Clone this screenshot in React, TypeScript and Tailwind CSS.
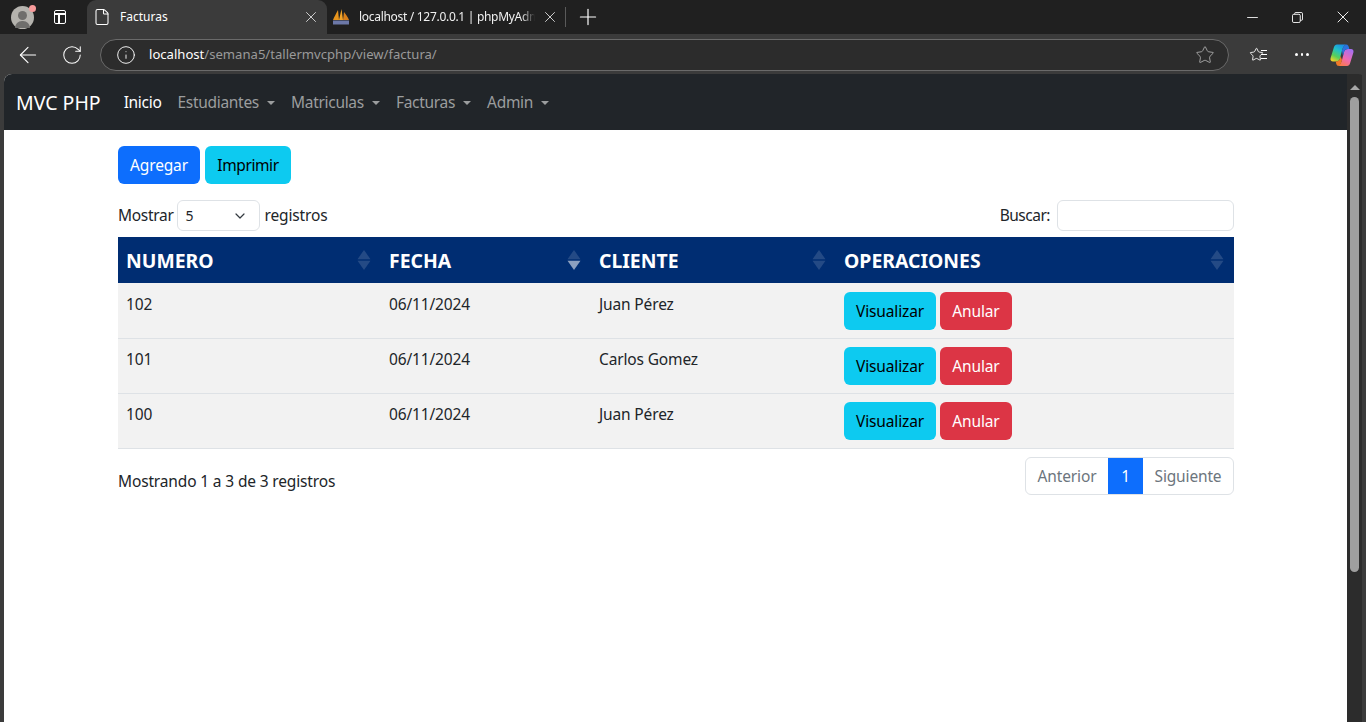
import React from "react";
import { ChevronDown, Info, RotateCw, ArrowLeft, Star, Plus, X, Minus, File } from "lucide-react";

const font = "[font-family:'Noto_Sans','Open_Sans',sans-serif]";

function Sort({ active }: { active?: boolean }) {
  return (
    <svg width="14" height="20" viewBox="0 0 14 20" className="absolute right-[10px] top-[13px]">
      <path d="M7 0 L13.5 9.2 H0.5 Z" fill="#fff" opacity="0.14" />
      <path d="M7 20 L13.5 10.8 H0.5 Z" fill="#fff" opacity={active ? 0.55 : 0.14} />
    </svg>
  );
}

function NavItem({ label, active, caret = true }: { label: string; active?: boolean; caret?: boolean }) {
  return (
    <a className={`flex items-center px-2 pt-[1px] text-[15.5px] tracking-[-0.3px] ${active ? "text-white" : "text-[#9b9d9e]"}`}>
      {label}
      {caret && <span className="ml-[8px] mt-[1px] h-0 w-0 border-x-[4.5px] border-t-[4.5px] border-x-transparent border-t-[#9b9d9e]" />}
    </a>
  );
}

function Copilot() {
  return (
    <svg width="24" height="24" viewBox="0 0 24 24">
      <defs>
        <linearGradient id="c1" x1="0.7" y1="0" x2="0.2" y2="1">
          <stop offset="0" stopColor="#1b8fe8" />
          <stop offset="0.35" stopColor="#21c0c8" />
          <stop offset="0.7" stopColor="#58cf58" />
          <stop offset="1" stopColor="#f5d327" />
        </linearGradient>
        <linearGradient id="c2" x1="0.7" y1="0" x2="0.2" y2="1">
          <stop offset="0" stopColor="#a86ff0" />
          <stop offset="0.55" stopColor="#f06ab0" />
          <stop offset="1" stopColor="#fb7a45" />
        </linearGradient>
      </defs>
      <path d="M7 1.5 H16 C14 2.5 12.8 4.5 12 7.5 L10 15.5 C9.5 17.5 8 18.5 6 18.5 H3 C1.2 18.5 0 17 0.6 15 L4 4 C4.5 2.5 5.5 1.5 7 1.5 Z" fill="url(#c1)" />
      <path d="M17 23 H8 C10 22 11.2 20 12 17 L14 9 C14.5 7 16 6 18 6 H21 C22.8 6 24 7.5 23.4 9.5 L20 20.5 C19.5 22 18.5 23 17 23 Z" fill="url(#c2)" />
      <path d="M12 7.5 C12.8 4.5 14 2.5 16 1.5 C18 1.5 19 3.5 19.3 6 H18 C16 6 14.5 7 14 9 L13 13 Z" fill="#2a73e0" />
      <path d="M12 17 L11 20 C10.5 21.5 9.5 22.5 8 23 C6.5 22.5 6 20.5 5.8 18.5 H6 C8 18.5 9.5 17.5 10 15.5 L10.6 13 Z" fill="#f07a28" />
    </svg>
  );
}

function Pma() {
  return (
    <svg width="18" height="18" viewBox="0 0 18 18">
      <path d="M1 12 C2 9 4 6 6 2 L7 12 Z" fill="#e8951c" />
      <path d="M7 12 L9.5 1 C10 5 10.5 8 11 12 Z" fill="#f2a428" />
      <path d="M11 12 L12 4 C14 7 16 9 17 12 Z" fill="#d9801a" />
      <rect x="1" y="12.5" width="16" height="4" fill="#6c78a8" />
    </svg>
  );
}

const rows = [
  ["102", "06/11/2024", "Juan Pérez"],
  ["101", "06/11/2024", "Carlos Gomez"],
  ["100", "06/11/2024", "Juan Pérez"],
];

export default function App() {
  return (
    <div className={`flex h-[722px] w-[1366px] flex-col overflow-hidden bg-[#3b3b3b] ${font}`}>
      {/* tab strip */}
      <div className="flex h-[34px] items-center bg-[#202020] text-white">
        <div className="relative ml-[11px] h-[23px] w-[23px] shrink-0 rounded-full bg-[#b5b3ae]">
          <span className="absolute left-[7px] top-[5px] h-[9px] w-[9px] rounded-full bg-[#6f6e6c]" />
          <span className="absolute left-[4px] top-[15px] h-[7px] w-[15px] rounded-t-full bg-[#6f6e6c]" />
          <span className="absolute -right-[2px] -top-[1px] h-[7px] w-[7px] rounded-full bg-[#f79a9a]" />
        </div>
        <div className="relative ml-[20px] h-[14px] w-[12px] shrink-0 rounded-[2px] border-[1.5px] border-white">
          <span className="absolute inset-x-0 top-[2px] h-[1.5px] bg-white" />
          <span className="absolute bottom-0 left-[3px] top-[2px] w-[1.5px] bg-white" />
        </div>
        <div className="ml-[21px] flex h-[34px] w-[240px] shrink-0 items-center self-end rounded-t-[9px] bg-[#3b3b3b] pl-[6px]">
          <File size={18} strokeWidth={1.4} />
          <span className="ml-[9px] text-[12px]">Facturas</span>
          <X size={18} strokeWidth={1.2} className="ml-auto mr-[7px] text-[#dcdcdc]" />
        </div>
        <div className="flex h-[34px] shrink-0 items-center pl-[5px]">
          <Pma />
          <span className="ml-[9px] w-[176px] overflow-hidden whitespace-nowrap text-[12px] tracking-[-0.3px] text-[#f0f0f0] [mask-image:linear-gradient(to_right,black_92%,transparent)]">localhost / 127.0.0.1 | phpMyAdmin</span>
          <X size={18} strokeWidth={1.2} className="ml-[6px] text-[#dcdcdc]" />
          <span className="ml-[6px] h-[20px] w-px bg-[#5a5a5a]" />
          <Plus size={26} strokeWidth={1.1} className="ml-[9px]" />
        </div>
        <div className="ml-auto flex items-center">
          <Minus size={17} strokeWidth={1.2} className="mr-[31px]" />
          <svg width="11" height="11" viewBox="0 0 12 12" fill="none" stroke="#fff" className="mr-[30px]">
            <rect x="0.5" y="2.5" width="8.5" height="9" rx="1.5" />
            <path d="M3 2.5 V1.5 A1 1 0 0 1 4 0.5 H10 A1.5 1.5 0 0 1 11.5 2 V8 A1 1 0 0 1 10.5 9 H9" />
          </svg>
          <X size={20} strokeWidth={1.1} className="mr-[13px]" />
        </div>
      </div>

      {/* toolbar */}
      <div className="flex h-[40px] items-center pt-[1px] text-white">
        <ArrowLeft size={26} strokeWidth={1.05} className="ml-[15px]" />
        <RotateCw size={22} strokeWidth={1.1} className="ml-[20px]" />
        <div className="ml-[17px] flex h-[32px] w-[1129px] items-center rounded-full border border-[#6a6a6a] bg-[#2c2c2c]">
          <Info size={20} strokeWidth={1.1} className="ml-[15px]" />
          <span className="ml-[13px] text-[13.1px] text-white">localhost<span className="text-[#9a9a9a]">/semana5/tallermvcphp/view/factura/</span></span>
          <Star size={20} strokeWidth={1.1} className="ml-auto mr-[13px] text-[#a8a8a8]" />
        </div>
        <div className="relative ml-[20px] h-[18px] w-[18px]">
          <Star size={15} strokeWidth={1.4} className="absolute left-0 top-[1px]" />
          <span className="absolute right-0 top-[4px] h-px w-[6px] bg-white" />
          <span className="absolute right-0 top-[8px] h-px w-[6px] bg-white" />
          <span className="absolute right-0 top-[12px] h-px w-[6px] bg-white" />
        </div>
        <div className="ml-[28px] flex gap-[3px]">
          <span className="h-[2.5px] w-[2.5px] rounded-full bg-white" />
          <span className="h-[2.5px] w-[2.5px] rounded-full bg-white" />
          <span className="h-[2.5px] w-[2.5px] rounded-full bg-white" />
        </div>
        <span className="ml-[21px] flex"><Copilot /></span>
      </div>

      {/* viewport */}
      <div className="ml-[4px] flex min-h-0 flex-1 overflow-hidden rounded-t-[8px]">
        <div className="flex w-[1343px] flex-col bg-white text-[#212529]">
          <nav className="flex h-[56px] items-center bg-[#212529] pl-[12px]">
            <span className="mr-[15px] pt-[1px] text-[19.5px] text-white">MVC PHP</span>
            <NavItem label="Inicio" active caret={false} />
            <NavItem label="Estudiantes" />
            <NavItem label="Matriculas" />
            <NavItem label="Facturas" />
            <NavItem label="Admin" />
          </nav>

          <main className="ml-[114px] w-[1116px] text-[15.5px] tracking-[-0.15px]">
            <div className="mt-[16px] flex gap-[5px]">
              <button className="h-[38px] w-[82px] rounded-[6px] bg-[#0d6efd] pt-[1px] text-white">Agregar</button>
              <button className="h-[38px] w-[86px] rounded-[6px] bg-[#0dcaf0] pt-[1px] tracking-[-0.4px] text-black">Imprimir</button>
            </div>

            <div className="mt-[16px] flex h-[31px] items-center justify-between">
              <div className="flex items-center">
                <span className="tracking-[-0.3px]">Mostrar</span>
                <div className="ml-[3px] mr-[5px] flex h-[31px] w-[83px] items-center justify-between rounded-[6px] border border-[#dee2e6] pl-[8px] pr-[11px] text-[14px]">
                  5
                  <ChevronDown size={16} strokeWidth={1.8} className="text-[#343a40]" />
                </div>
                registros
              </div>
              <div className="flex items-center">
                <span className="tracking-[-0.5px]">Buscar:</span>
                <div className="ml-[7px] h-[31px] w-[177px] rounded-[6px] border border-[#dee2e6]" />
              </div>
            </div>

            <table className="mt-[6px] w-[1116px] table-fixed border-collapse">
              <colgroup>
                <col className="w-[263px]" />
                <col className="w-[210px]" />
                <col className="w-[245px]" />
                <col className="w-[398px]" />
              </colgroup>
              <thead>
                <tr className="h-[46px] bg-[#002d72] text-left text-[19.4px] font-bold tracking-normal text-white">
                  <th className="relative px-[8px] pt-[1px]">NUMERO<Sort /></th>
                  <th className="relative px-[8px] pt-[1px]">FECHA<Sort active /></th>
                  <th className="relative px-[8px] pt-[1px]">CLIENTE<Sort /></th>
                  <th className="relative px-[8px] pt-[1px]">OPERACIONES<Sort /></th>
                </tr>
              </thead>
              <tbody>
                {rows.map((r, i) => (
                  <tr key={r[0]} className="h-[55px] border-b border-[#dee2e6] bg-[#f2f2f2]">
                    {r.map((c, j) => (
                      <td key={j} className={`px-[8px] pb-[8px] align-top ${i === 0 ? "pt-[10px]" : "pt-[9px]"}`}>{c}</td>
                    ))}
                    <td className={`px-[8px] pb-[7px] align-top ${i === 0 ? "pt-[9px]" : "pt-[8px]"}`}>
                      <div className="flex gap-[4px]">
                        <button className={`h-[38px] w-[92px] rounded-[6px] bg-[#0dcaf0] text-black ${i === 0 ? "pt-[1px]" : "pt-[2px]"}`}>Visualizar</button>
                        <button className={`h-[38px] w-[72px] rounded-[6px] bg-[#dc3545] text-white ${i === 0 ? "pt-[1px]" : "pt-[2px]"}`}>Anular</button>
                      </div>
                    </td>
                  </tr>
                ))}
              </tbody>
            </table>

            <div className="mt-[8px] flex items-start justify-between">
              <span className="mt-[13px]">Mostrando 1 a 3 de 3 registros</span>
              <div className="flex h-[38px] items-stretch overflow-hidden rounded-[6px] border border-[#dee2e6] text-[#6c757d]">
                <span className="flex w-[82px] items-center justify-center pt-[2px]">Anterior</span>
                <span className="-my-px flex w-[35px] items-center justify-center bg-[#0d6efd] pt-[2px] text-white">1</span>
                <span className="flex w-[90px] items-center justify-center pt-[2px]">Siguiente</span>
              </div>
            </div>
          </main>
        </div>

        {/* scrollbar */}
        <div className="flex w-[15px] flex-col items-center bg-[#2c2c2c] pt-[11px]">
          <span className="h-0 w-0 border-x-[5px] border-b-[5px] border-x-transparent border-b-[#a8a8a8]" />
          <span className="mt-[7px] h-[475px] w-[9px] rounded-full bg-[#9f9f9f]" />
        </div>
      </div>
    </div>
  );
}
